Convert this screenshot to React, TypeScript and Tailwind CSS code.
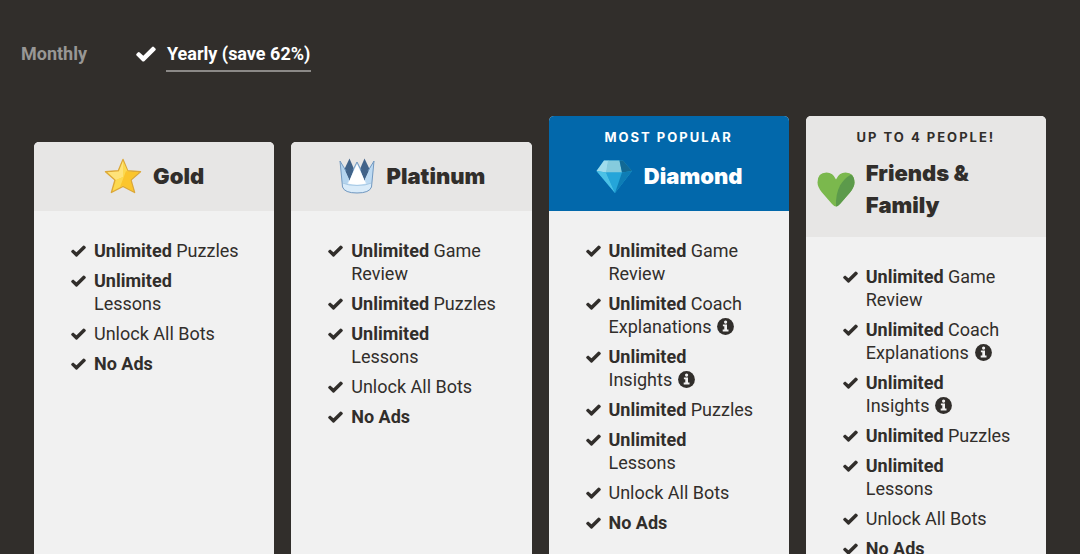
import React, { useState } from 'react';
import clsx from 'clsx';

interface Feature {
  bold?: string;
  text?: string;
  info?: boolean;
}

interface Plan {
  id: string;
  name: string;
  icon: React.ReactNode;
  ribbon?: string;
  highlighted?: boolean;
  features: Feature[];
}

const puzzles: Feature = { bold: 'Unlimited', text: 'Puzzles' };
const lessons: Feature = { bold: 'Unlimited', text: 'Lessons' };
const review: Feature = { bold: 'Unlimited', text: 'Game Review' };
const coach: Feature = { bold: 'Unlimited', text: 'Coach Explanations', info: true };
const insights: Feature = { bold: 'Unlimited', text: 'Insights', info: true };
const bots: Feature = { text: 'Unlock All Bots' };
const noAds: Feature = { bold: 'No Ads' };

function CheckIcon({ className }: { className?: string }) {
  return (
    <svg viewBox="0 0 20 16" className={className} fill="currentColor" aria-hidden="true">
      <path d="M8.3 15.2Q7.3 16 6.3 15.2L.6 9.6Q-.2 8.7.6 7.8L1.8 6.6Q2.7 5.7 3.7 6.5L7.3 9.7 16.1.9Q17 .1 17.9.9L19.4 2.4Q20.2 3.3 19.4 4.2Z" />
    </svg>
  );
}

function InfoIcon() {
  return (
    <svg viewBox="0 0 17 17" className="size-[17px]" aria-hidden="true">
      <circle cx="8.5" cy="8.5" r="8.4" fill="#312e2b" />
      <circle cx="8.6" cy="4.1" r="1.6" fill="#f1f1f1" />
      <path d="M5.9 6.5H10V11.6H11.5V13.4H5.7V11.6H7.3V8.3H5.9Z" fill="#f1f1f1" />
    </svg>
  );
}

function StarIcon() {
  return (
    <svg viewBox="0 0 38 38" className="size-[38px] shrink-0" aria-hidden="true">
      <path
        d="M19 2.5 23.7 13.7 36.5 14.7 27 23 30.6 35.5 19 29.3 7.4 35.5 11 23 1.5 14.7 14.3 13.7Z"
        fill="#fdd23b"
        stroke="#dca83a"
        strokeWidth="1.4"
        strokeLinejoin="round"
      />
      <path d="M19 4 14.9 14.4 3.5 15.3 12 23 19 20Z" fill="#fee37a" />
      <path d="M19 4 19 20 12 23 8.8 33.8 19 28.4 23.5 13.9Z" fill="#fcd950" />
      <path d="M22 14 16 30 19 28.5 29.3 33.9 26 22.7 34.5 15.4 23.2 14.4Z" fill="#fbc52c" />
    </svg>
  );
}

function CrownIcon() {
  return (
    <svg viewBox="0 0 38 38" className="size-[38px] shrink-0" aria-hidden="true">
      <path
        d="M2 4 8 12.5 11 8 15 12 19 5 23 12 27 8 30 12.5 36 4 33.5 30Q31.5 36 19 36 6.5 36 4.5 30Z"
        fill="#c5dff4"
      />
      <path d="M11.5 1.5 16 12 11.5 24 6.5 12Z" fill="#416389" />
      <path d="M26.5 1.5 31.5 12 26.5 24 22 12Z" fill="#416389" />
      <path d="M2 4 11 22 9 27 4 25Z" fill="#b4d4ee" />
      <path d="M36 4 27 22 29 27 34 25Z" fill="#bddaf2" />
      <path d="M19 7 28 26.5Q19 29 10 26.5Z" fill="#fff" />
      <path d="M4.2 26Q10 28.5 19 28.5 28 28.5 33.8 26L33.3 30Q31 35.5 19 35.5 7 35.5 4.7 30Z" fill="#d9ebf9" />
      <path d="M4.5 26Q10 28.5 19 28.5 28 28.5 33.5 26" fill="none" stroke="#9dc1df" strokeWidth="0.8" />
      <path
        d="M8 14 2 4 4.5 30Q6.5 36 19 36 31.5 36 33.5 30L36 4 30 14M15 13 19 5 23 13"
        fill="none"
        stroke="#7399c0"
        strokeWidth="1"
        strokeLinejoin="round"
      />
    </svg>
  );
}

function DiamondIcon() {
  return (
    <svg viewBox="0 0 38 38" className="size-[38px] shrink-0" aria-hidden="true">
      <path d="M9 3.5H28L37 14 20 36 1.5 14Z" fill="#24a3d8" />
      <path d="M9 3.5 1.5 14 11.5 15.5 13.5 3.5Z" fill="#a0dcec" />
      <path d="M13 3.5H24.5L27 15.5H11Z" fill="#85cbdd" />
      <path d="M24.5 3.5H28L37 14 27 15.5Z" fill="#126995" />
      <path d="M1.5 14 11 15.5 20 36Z" fill="#4bc1e6" />
      <path d="M11 15.5H27L20 36Z" fill="#25a5d9" />
      <path d="M37 14 27 15.5 20 36Z" fill="#0e7db5" />
    </svg>
  );
}

function HeartIcon() {
  return (
    <svg viewBox="0 0 38 38" className="size-[38px] shrink-0" aria-hidden="true">
      <path
        d="M19 36.5Q17.5 36.5 15 34L5 22.5Q.5 17 .5 12.5.5 2.5 9.5 2.5 16 2.5 19 9.5 22 2.5 28.5 2.5 37.5 2.5 37.5 12.5 37.5 17 33 22.5L23 34Q20.5 36.5 19 36.5Z"
        fill="#7bb84d"
      />
      <path d="M34 4.5Q37.5 7 37.5 12.5 37.5 17 33 22.5L23 34Q20.5 36.5 19 36.5 18.5 24 23 15.5 27 8.5 34 4.5Z" fill="#5c9a4b" />
    </svg>
  );
}

const plans: Plan[] = [
  { id: 'gold', name: 'Gold', icon: <StarIcon />, features: [puzzles, lessons, bots, noAds] },
  { id: 'platinum', name: 'Platinum', icon: <CrownIcon />, features: [review, puzzles, lessons, bots, noAds] },
  {
    id: 'diamond',
    name: 'Diamond',
    icon: <DiamondIcon />,
    ribbon: 'Most popular',
    highlighted: true,
    features: [review, coach, insights, puzzles, lessons, bots, noAds],
  },
  {
    id: 'family',
    name: 'Friends & Family',
    icon: <HeartIcon />,
    ribbon: 'Up to 4 people!',
    features: [review, coach, insights, puzzles, lessons, bots, noAds],
  },
];

const periods = [
  { id: 'monthly', label: 'Monthly' },
  { id: 'yearly', label: 'Yearly (save 62%)' },
];

function PlanCard({ plan }: { plan: Plan }) {
  return (
    <article
      className={clsx('flex flex-col overflow-hidden rounded-t-[5px] bg-[#f1f1f1]', !plan.ribbon && 'mt-[26px]')}
    >
      <header
        className={clsx(
          'font-[Inter,sans-serif]',
          plan.highlighted ? 'bg-[#0268ab] text-white' : 'bg-[#e7e6e5] text-[#312e2b]'
        )}
      >
        {plan.ribbon && (
          <p className="-mb-1.5 pt-2.5 text-center text-[13px] leading-[22px] font-bold tracking-[2px] uppercase">
            {plan.ribbon}
          </p>
        )}
        <div className="flex items-center justify-center gap-[11px] px-[11px] pt-[15px] pb-4">
          {plan.icon}
          <h2 className="text-[22px] leading-8 font-black">{plan.name}</h2>
        </div>
      </header>

      <ul className="flex flex-col gap-[7px] pt-7 pr-[35px] pb-12 pl-[37px]">
        {plan.features.map((feature, index) => (
          <li key={index} className="flex items-start gap-2">
            <CheckIcon className="mt-1.5 h-3 w-[15px] shrink-0" />
            <span>
              {feature.bold && <strong className="font-bold">{feature.bold}</strong>} {feature.text}
              {feature.info && (
                <button type="button" aria-label={`About ${feature.text}`} className="ml-1.5 inline-block align-[-2px] leading-none">
                  <InfoIcon />
                </button>
              )}
            </span>
          </li>
        ))}
      </ul>
    </article>
  );
}

export default function App() {
  const [period, setPeriod] = useState('yearly');

  return (
    <main className="min-h-screen bg-[#312e2b] font-['Roboto',sans-serif] text-[18px] leading-[23px] text-[#312e2b]">
      <fieldset aria-label="Billing period" className="flex items-center gap-12 px-5 pt-9">
        {periods.map(({ id, label }) => (
          <label key={id} className="flex cursor-pointer items-center gap-2.5">
            <input
              type="radio"
              name="period"
              value={id}
              checked={period === id}
              onChange={() => setPeriod(id)}
              className="sr-only"
            />
            {period === id && <CheckIcon className="h-4 w-5 text-white" />}
            <span
              className={clsx(
                'border-b-2 px-px pt-1.5 pb-[5px] font-bold',
                period === id ? 'border-[#8b8987] text-white' : 'border-transparent text-[#989795]'
              )}
            >
              {label}
            </span>
          </label>
        ))}
      </fieldset>

      <section className="grid grid-cols-4 gap-[17px] px-[34px] pt-11">
        {plans.map(plan => (
          <PlanCard key={plan.id} plan={plan} />
        ))}
      </section>
    </main>
  );
}
